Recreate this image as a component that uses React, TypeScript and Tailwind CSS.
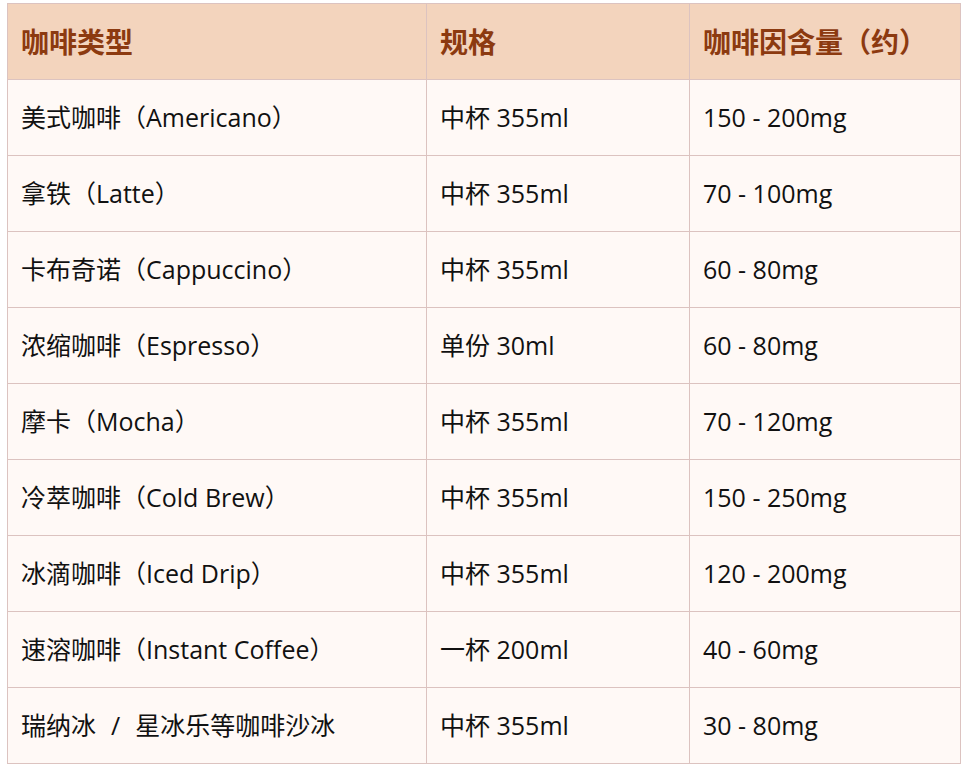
import type { ReactNode } from "react";

const rows: [ReactNode, string, string][] = [
  ["美式咖啡（Americano）", "中杯 355ml", "150 - 200mg"],
  ["拿铁（Latte）", "中杯 355ml", "70 - 100mg"],
  ["卡布奇诺（Cappuccino）", "中杯 355ml", "60 - 80mg"],
  ["浓缩咖啡（Espresso）", "单份 30ml", "60 - 80mg"],
  ["摩卡（Mocha）", "中杯 355ml", "70 - 120mg"],
  ["冷萃咖啡（Cold Brew）", "中杯 355ml", "150 - 250mg"],
  ["冰滴咖啡（Iced Drip）", "中杯 355ml", "120 - 200mg"],
  ["速溶咖啡（Instant Coffee）", "一杯 200ml", "40 - 60mg"],
  [
    <>
      瑞纳冰<span className="mx-[15px]">/</span>星冰乐等咖啡沙冰
    </>,
    "中杯 355ml",
    "30 - 80mg",
  ],
];

export default function App() {
  return (
    <div className="min-h-screen bg-white pl-[7px] pt-[3px] font-['Open_Sans','Noto_Sans_CJK_SC',sans-serif]">
      <table className="w-[953px] table-fixed border-collapse">
        <colgroup>
          <col className="w-[419px]" />
          <col className="w-[263px]" />
          <col className="w-[271px]" />
        </colgroup>
        <thead>
          <tr className="h-[76px] bg-[#f3d4bd]">
            {["咖啡类型", "规格", "咖啡因含量（约）"].map((h) => (
              <th
                key={h}
                className="border border-[#dcc3c0] px-[13px] text-left text-[28px] font-bold text-[#8c3a10]"
              >
                {h}
              </th>
            ))}
          </tr>
        </thead>
        <tbody>
          {rows.map((r, ri) => (
            <tr key={ri} className="h-[76px] bg-[#fff9f6]">
              {r.map((c, i) => (
                <td
                  key={i}
                  className="border border-[#dcc3c0] px-[13px] text-[25px] whitespace-pre text-[#111]"
                >
                  {c}
                </td>
              ))}
            </tr>
          ))}
        </tbody>
      </table>
    </div>
  );
}
